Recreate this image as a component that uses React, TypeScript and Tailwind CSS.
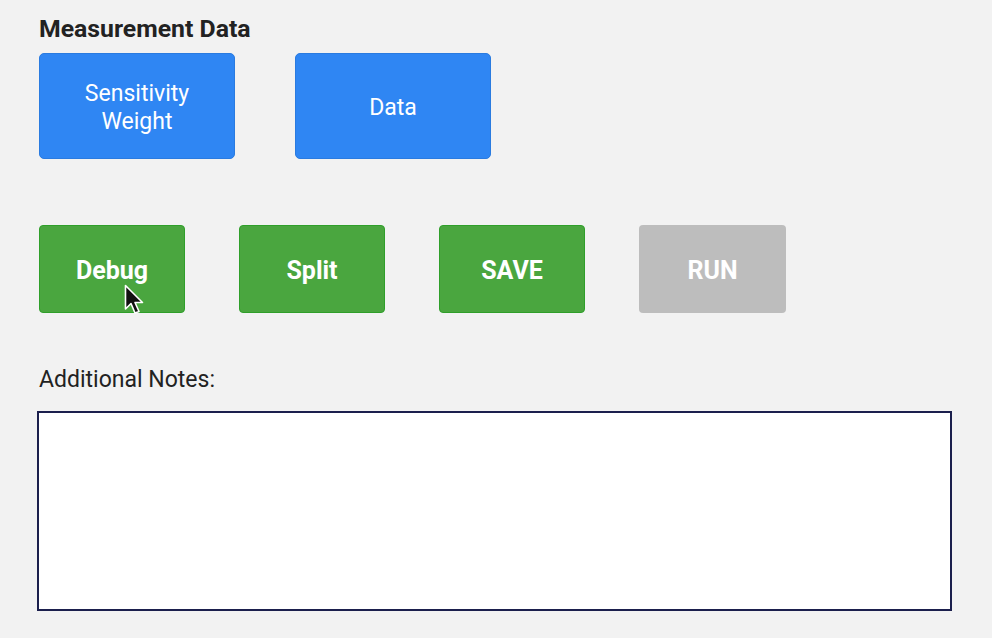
import React from "react";

export default function App() {
  return (
    <div className="min-h-[638px] w-[992px] bg-[#f2f2f2] font-['Roboto',sans-serif] relative">
      <div className="pl-[39px] pt-[13px]">
        <h1 className="text-[24.8px] leading-[32px] font-bold text-[#222]">Measurement Data</h1>
        <div className="mt-[8px] flex gap-[60px]">
          <button className="w-[196px] h-[106px] pt-[3px] rounded-[5px] bg-[#2f86f3] border border-[#2a7be0] text-white text-[23px] leading-[28px]">
            Sensitivity
            <br />
            Weight
          </button>
          <button className="w-[196px] h-[106px] pt-[3px] rounded-[5px] bg-[#2f86f3] border border-[#2a7be0] text-white text-[23px] leading-[28px]">
            Data
          </button>
        </div>
        <div className="mt-[66px] flex gap-[54px]">
          <button className="w-[146px] h-[88px] pt-[3px] rounded-[4px] bg-[#4aa63f] border border-[#2f9f2a] text-white text-[25px] font-bold">
            Debug
          </button>
          <button className="w-[146px] h-[88px] pt-[3px] rounded-[4px] bg-[#4aa63f] border border-[#2f9f2a] text-white text-[25px] font-bold">
            Split
          </button>
          <button className="w-[146px] h-[88px] pt-[3px] rounded-[4px] bg-[#4aa63f] border border-[#2f9f2a] text-white text-[25px] font-bold">
            SAVE
          </button>
          <button className="w-[147px] h-[88px] pt-[3px] rounded-[4px] bg-[#bdbdbd] text-white text-[25px] font-bold">
            RUN
          </button>
        </div>
        <div className="mt-[53px] text-[23px] leading-[28px] text-[#222]">Additional Notes:</div>
        <textarea className="mt-[17px] -ml-[2px] block w-[915px] h-[200px] bg-white border-2 border-[#1b1f4d] outline-none resize-none" />
      </div>
      <svg className="absolute left-[124px] top-[284px]" width="22" height="34" viewBox="0 0 22 34">
        <path d="M1.5 1.5 L1.5 25 L7 19.5 L11 29 L15 27.5 L11 18.5 L18.5 18.5 Z" fill="#111" stroke="#fff" strokeWidth="1.6" strokeLinejoin="round" />
      </svg>
    </div>
  );
}
